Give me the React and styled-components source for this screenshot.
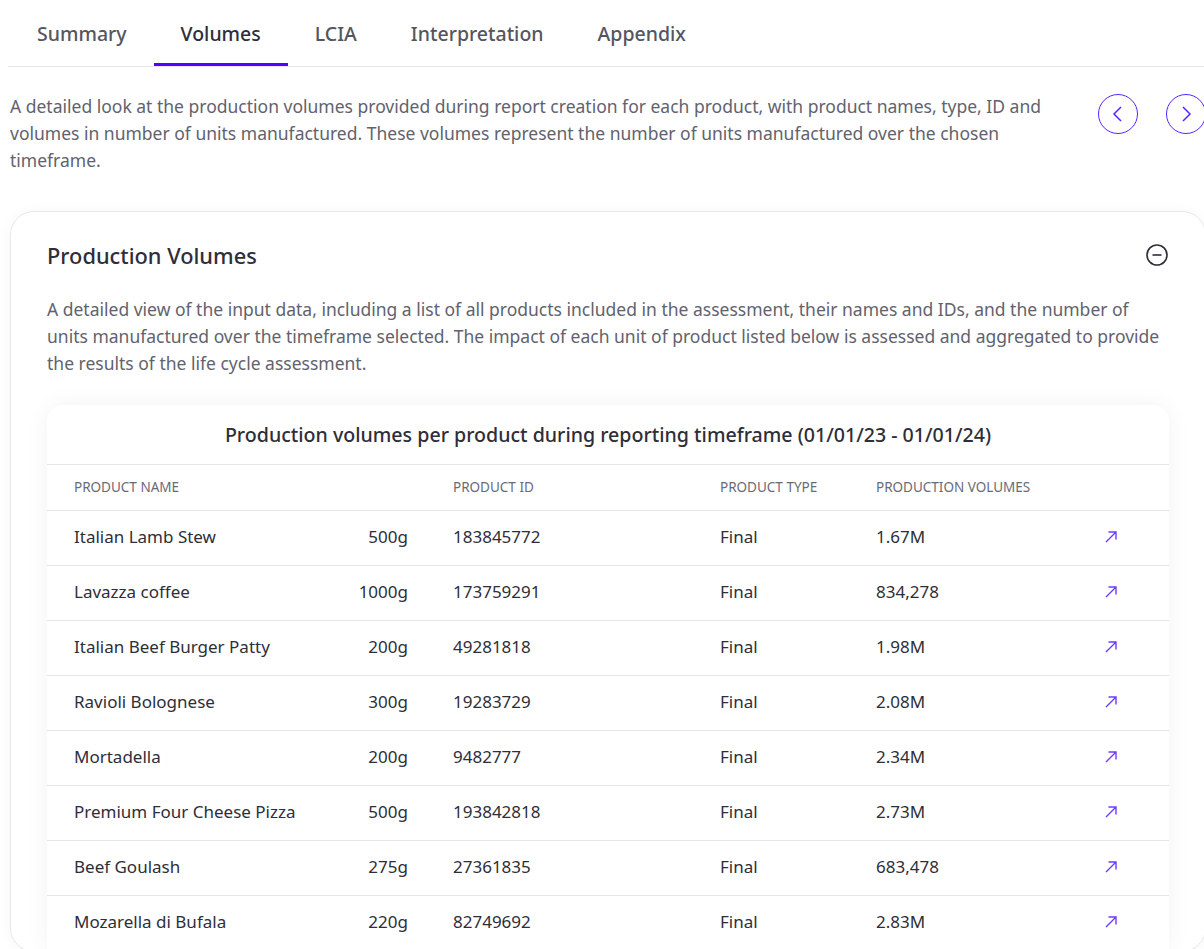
import React from 'react'
import styled, { createGlobalStyle } from 'styled-components'

const GlobalStyle = createGlobalStyle`
  body {
    margin: 0;
    background: #ffffff;
    font-family: "Noto Sans", "Open Sans", sans-serif;
    color: #2e2e38;
  }
`

const tabs = ['Summary', 'Volumes', 'LCIA', 'Interpretation', 'Appendix']

const products = [
  { name: 'Italian Lamb Stew', weight: '500g', id: '183845772', type: 'Final', volume: '1.67M' },
  { name: 'Lavazza coffee', weight: '1000g', id: '173759291', type: 'Final', volume: '834,278' },
  { name: 'Italian Beef Burger Patty', weight: '200g', id: '49281818', type: 'Final', volume: '1.98M' },
  { name: 'Ravioli Bolognese', weight: '300g', id: '19283729', type: 'Final', volume: '2.08M' },
  { name: 'Mortadella', weight: '200g', id: '9482777', type: 'Final', volume: '2.34M' },
  { name: 'Premium Four Cheese Pizza', weight: '500g', id: '193842818', type: 'Final', volume: '2.73M' },
  { name: 'Beef Goulash', weight: '275g', id: '27361835', type: 'Final', volume: '683,478' },
  { name: 'Mozarella di Bufala', weight: '220g', id: '82749692', type: 'Final', volume: '2.83M' },
]

function App() {
  return (
    <Page>
      <GlobalStyle />
      <TabBar>
        {tabs.map((t) => (
          <Tab key={t} active={t === 'Volumes'}>{t}</Tab>
        ))}
      </TabBar>

      <Intro>
        <IntroText>
          A detailed look at the production volumes provided during report creation for each product, with product names, type, ID and
          volumes in number of units manufactured. These volumes represent the number of units manufactured over the chosen
          timeframe.
        </IntroText>
        <Pager>
          <RoundButton aria-label="previous">
            <svg width="20" height="20" viewBox="0 0 20 20" fill="none">
              <path d="M13 3 L6 10 L13 17" stroke="currentColor" strokeWidth="1.5" />
            </svg>
          </RoundButton>
          <RoundButton aria-label="next">
            <svg width="20" height="20" viewBox="0 0 20 20" fill="none">
              <path d="M7 3 L14 10 L7 17" stroke="currentColor" strokeWidth="1.5" />
            </svg>
          </RoundButton>
        </Pager>
      </Intro>

      <Card>
        <CardHead>
          <CardTitle>Production Volumes</CardTitle>
          <svg width="24" height="24" viewBox="0 0 24 24" fill="none">
            <circle cx="12" cy="12" r="10" stroke="#2e2e38" strokeWidth="1.6" />
            <path d="M7.5 12 H16.5" stroke="#2e2e38" strokeWidth="1.6" />
          </svg>
        </CardHead>
        <CardText>
          A detailed view of the input data, including a list of all products included in the assessment, their names and IDs, and the number of
          units manufactured over the timeframe selected. The impact of each unit of product listed below is assessed and aggregated to provide
          the results of the life cycle assessment.
        </CardText>

        <TableCard>
          <TableTitle>Production volumes per product during reporting timeframe (01/01/23 - 01/01/24)</TableTitle>
          <HeadRow>
            <span>Product name</span>
            <span />
            <span>Product ID</span>
            <span>Product type</span>
            <span>Production volumes</span>
            <span />
          </HeadRow>
          {products.map((p) => (
            <Row key={p.id}>
              <span>{p.name}</span>
              <Weight>{p.weight}</Weight>
              <span>{p.id}</span>
              <span>{p.type}</span>
              <span>{p.volume}</span>
              <LinkIcon>
                <svg width="14" height="14" viewBox="0 0 14 14" fill="none">
                  <path d="M2 12 L12 2 M4.5 2 H12 V9.5" stroke="currentColor" strokeWidth="1.4" />
                </svg>
              </LinkIcon>
            </Row>
          ))}
        </TableCard>
      </Card>
    </Page>
  )
}

export default App

const Page = styled.div`
    width: 1196px;
    padding: 0 0 40px 10px;
`

const TabBar = styled.nav`
    display: flex;
    height: 66px;
    border-bottom: 1px solid #e6e6ea;
    margin-left: -2px;
    padding-left: 2px;
`

const Tab = styled.div`
    padding: 4px 27px 0;
    height: 66px;
    box-sizing: border-box;
    display: flex;
    align-items: center;
    font-size: 19.5px;
    font-weight: 500;
    color: ${(p) => (p.active ? '#2e2e38' : '#555560')};
    border-bottom: 3px solid ${(p) => (p.active ? '#5200ff' : 'transparent')};
    margin-bottom: -1px;
`

const Intro = styled.div`
    display: flex;
    justify-content: space-between;
    align-items: flex-start;
    padding-top: 26px;
`

const IntroText = styled.p`
    margin: 0;
    width: 1050px;
    font-size: 17.5px;
    line-height: 27px;
    color: #62626e;
`

const Pager = styled.div`
    display: flex;
    gap: 28px;
    padding-top: 1px;
`

const RoundButton = styled.button`
    width: 40px;
    height: 40px;
    border-radius: 50%;
    border: 1.5px solid #5a24ff;
    background: #fff;
    color: #5a24ff;
    display: flex;
    align-items: center;
    justify-content: center;
    padding: 0;
    cursor: pointer;
`

const Card = styled.section`
    margin-top: 37px;
    border: 1px solid #e8e8ee;
    border-radius: 24px;
    background: #fff;
    box-shadow: 0 0 14px rgba(0, 0, 0, 0.04);
    padding: 26px 36px 0;
`

const CardHead = styled.div`
    display: flex;
    justify-content: space-between;
    align-items: center;
    height: 34px;
`

const CardTitle = styled.h2`
    margin: 0;
    font-size: 21.8px;
    font-weight: 500;
    color: #2e2e38;
`

const CardText = styled.p`
    margin: 24px 0 28px;
    font-size: 17.5px;
    line-height: 27px;
    color: #62626e;
`

const TableCard = styled.div`
    background: #fff;
    border-radius: 16px 16px 0 0;
    box-shadow: 0 0 24px rgba(0, 0, 0, 0.05);
`

const TableTitle = styled.div`
    height: 59px;
    display: flex;
    align-items: center;
    justify-content: center;
    font-size: 19.6px;
    font-weight: 500;
    color: #2e2e38;
    border-bottom: 1px solid #e6e6ea;
`

const columns = `
    display: grid;
    grid-template-columns: 234px 100px 312px 156px 1fr 60px;
    align-items: center;
    padding: 0 28px 0 27px;
    border-bottom: 1px solid #e6e6ea;
    box-sizing: border-box;
    & > span:nth-child(3) { padding-left: 45px; }
`

const HeadRow = styled.div`
    ${columns}
    height: 46px;
    padding-bottom: 2px;
    font-size: 13.5px;
    text-transform: uppercase;
    color: #6a6a76;
`

const Row = styled.div`
    ${columns}
    height: 55px;
    padding-bottom: 3px;
    font-size: 17px;
    color: #2e2e38;
`

const Weight = styled.span`
    text-align: right;
`

const LinkIcon = styled.span`
    color: #6e3cff;
    display: flex;
    justify-content: center;
`
